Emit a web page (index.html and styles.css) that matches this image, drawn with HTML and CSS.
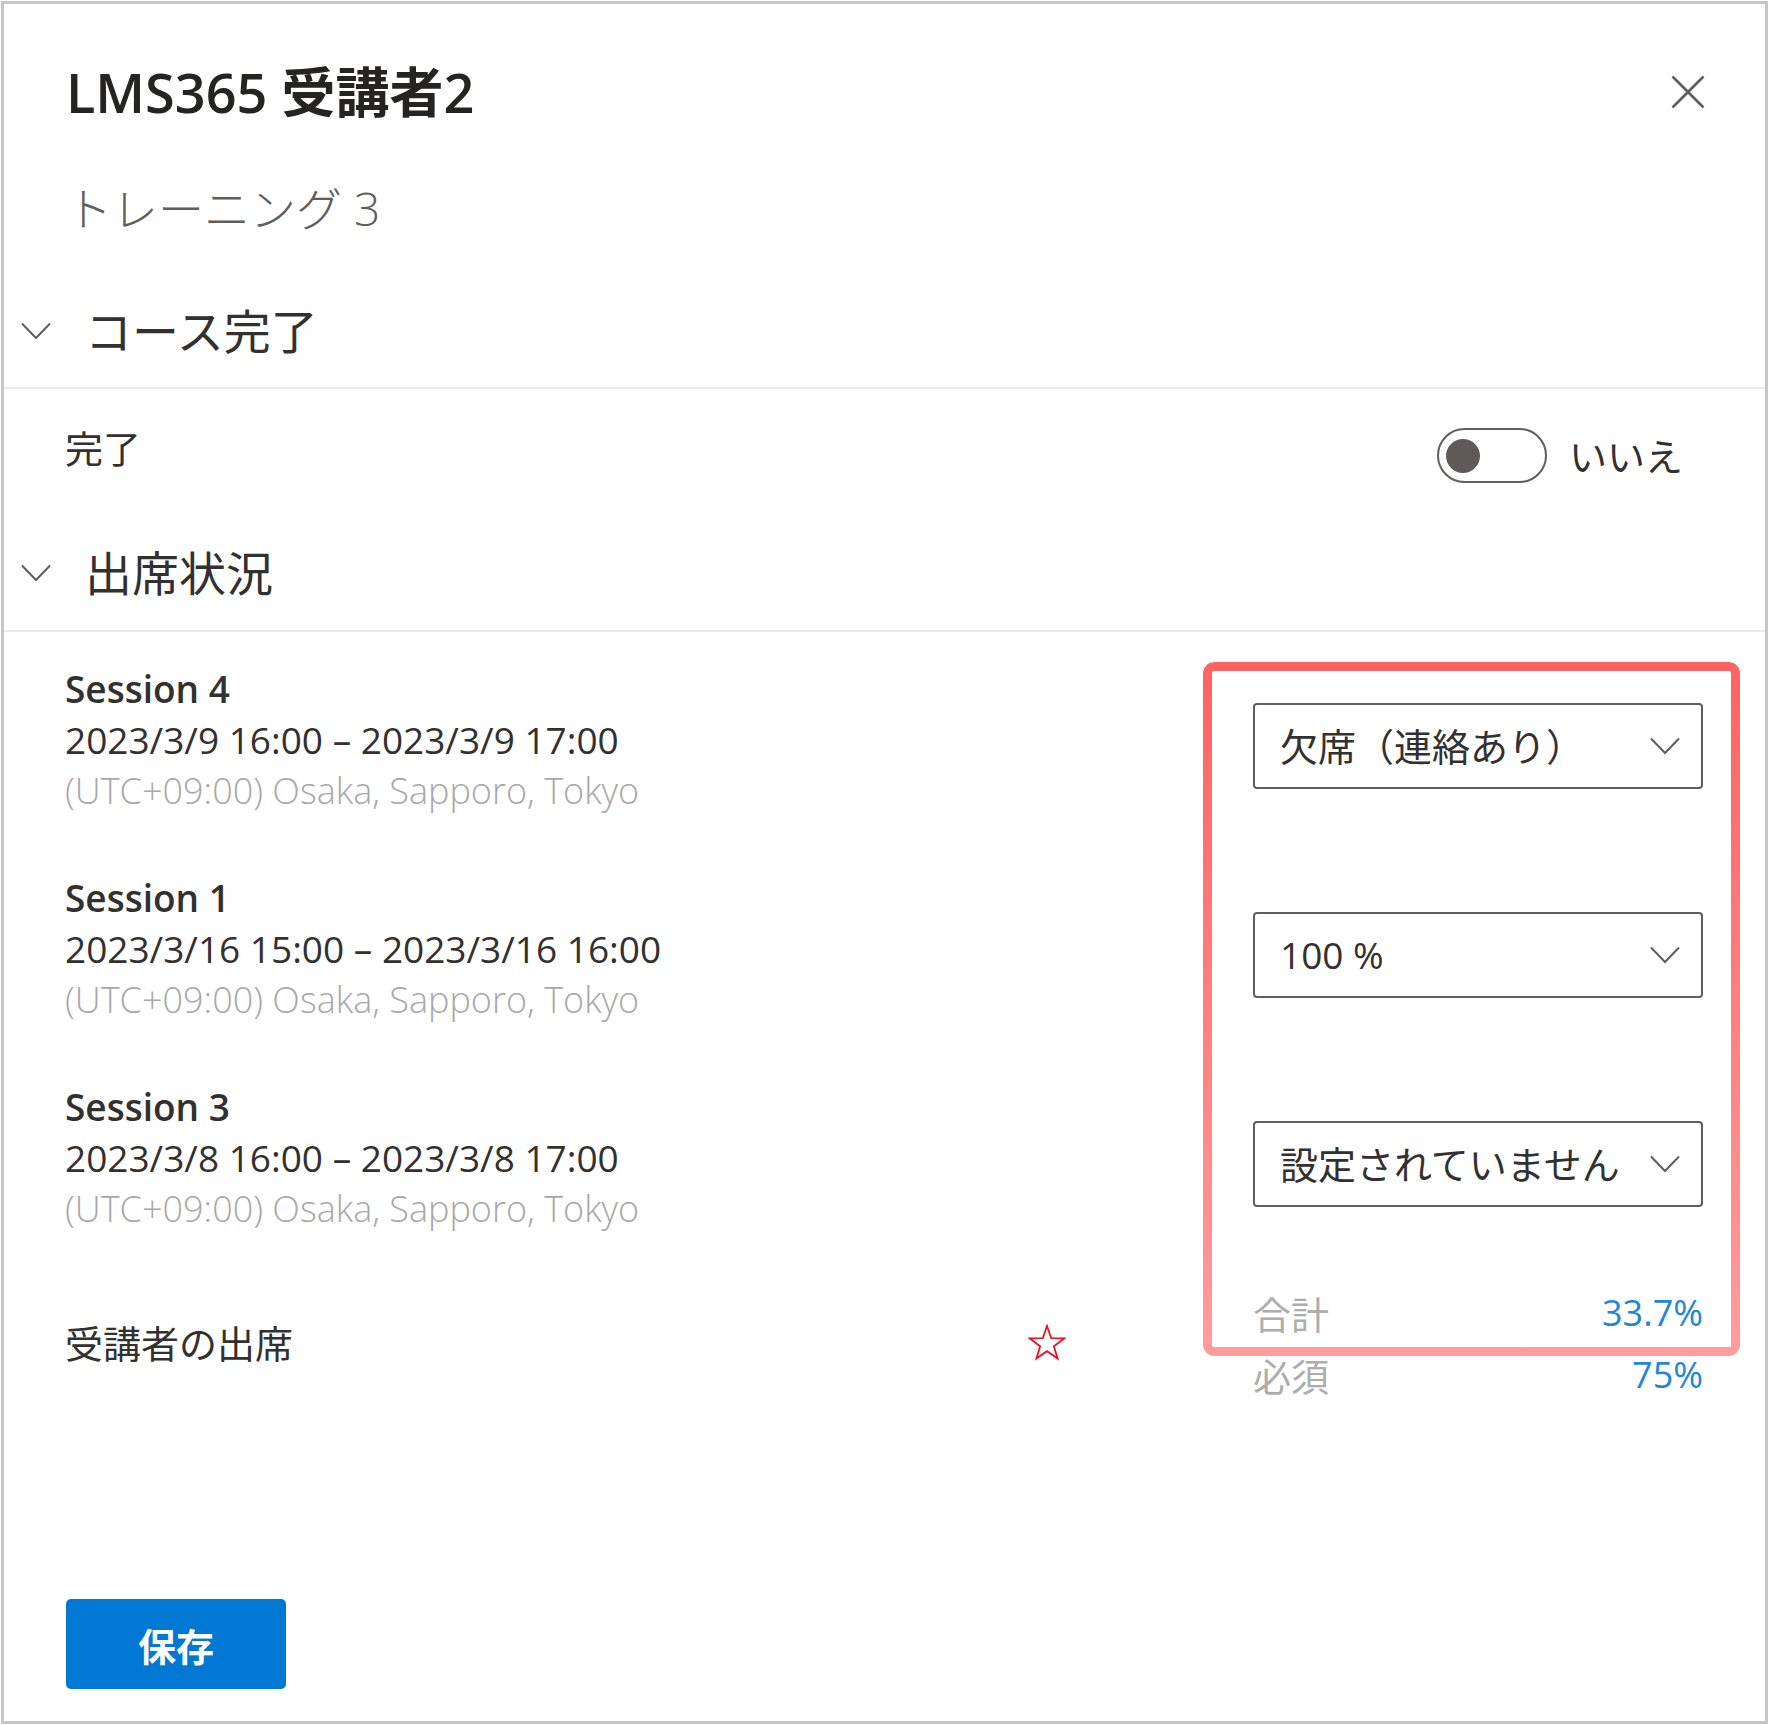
FILE: index.html
```html
<!DOCTYPE html>
<html lang="ja">
<head>
<meta charset="utf-8">
<title>LMS365 受講者2</title>
<link rel="stylesheet" href="styles.css">
</head>
<body>
<div class="panel">
  <header class="header">
    <h1 class="title">LMS365 受講者2</h1>
    <button class="close" aria-label="閉じる">
      <svg width="34" height="34" viewBox="0 0 34 34"><path d="M1.5 1.5 L32.5 32.5 M32.5 1.5 L1.5 32.5" stroke="#605e5c" stroke-width="2.6" fill="none"/></svg>
    </button>
  </header>
  <div class="subtitle">トレーニング 3</div>

  <div class="section-head">
    <svg class="chev" width="30" height="18" viewBox="0 0 30 18"><path d="M1 1.5 L15 16 L29 1.5" stroke="#605e5c" stroke-width="2" fill="none"/></svg>
    <span class="section-title">コース完了</span>
  </div>

  <div class="complete-row">
    <span class="label">完了</span>
    <div class="toggle-group">
      <span class="toggle"><span class="knob"></span></span>
      <span class="toggle-text">いいえ</span>
    </div>
  </div>

  <div class="section-head second">
    <svg class="chev" width="30" height="18" viewBox="0 0 30 18"><path d="M1 1.5 L15 16 L29 1.5" stroke="#605e5c" stroke-width="2" fill="none"/></svg>
    <span class="section-title">出席状況</span>
  </div>

  <div class="attendance">
    <div class="att-row">
      <div class="session">
        <div class="s-title">Session 4</div>
        <div class="s-time">2023/3/9 16:00 – 2023/3/9 17:00</div>
        <div class="s-tz">(UTC+09:00) Osaka, Sapporo, Tokyo</div>
      </div>
      <div class="dropdown">
        <span class="dd-text">欠席（連絡あり）</span>
        <svg class="dd-chev" width="30" height="18" viewBox="0 0 30 18"><path d="M1 1.5 L15 16 L29 1.5" stroke="#605e5c" stroke-width="2" fill="none"/></svg>
      </div>
    </div>
    <div class="att-row">
      <div class="session">
        <div class="s-title">Session 1</div>
        <div class="s-time">2023/3/16 15:00 – 2023/3/16 16:00</div>
        <div class="s-tz">(UTC+09:00) Osaka, Sapporo, Tokyo</div>
      </div>
      <div class="dropdown">
        <span class="dd-text latin">100 %</span>
        <svg class="dd-chev" width="30" height="18" viewBox="0 0 30 18"><path d="M1 1.5 L15 16 L29 1.5" stroke="#605e5c" stroke-width="2" fill="none"/></svg>
      </div>
    </div>
    <div class="att-row">
      <div class="session">
        <div class="s-title">Session 3</div>
        <div class="s-time">2023/3/8 16:00 – 2023/3/8 17:00</div>
        <div class="s-tz">(UTC+09:00) Osaka, Sapporo, Tokyo</div>
      </div>
      <div class="dropdown">
        <span class="dd-text">設定されていません</span>
        <svg class="dd-chev" width="30" height="18" viewBox="0 0 30 18"><path d="M1 1.5 L15 16 L29 1.5" stroke="#605e5c" stroke-width="2" fill="none"/></svg>
      </div>
    </div>

    <div class="summary-row">
      <div class="summary-label">
        <span class="label">受講者の出席</span>
        <svg class="star" width="38" height="38" viewBox="0 0 38 38"><polygon points="19,2 23.23,14.18 36.12,14.44 25.85,22.22 29.58,34.56 19,27.2 8.42,34.56 12.15,22.22 1.88,14.44 14.77,14.18" fill="none" stroke="#e81123" stroke-width="1.8" stroke-linejoin="miter"/></svg>
      </div>
      <div class="totals">
        <div class="total-row"><span class="t-key">合計</span><span class="t-val">33.7%</span></div>
        <div class="total-row"><span class="t-key">必須</span><span class="t-val">75%</span></div>
      </div>
    </div>
  </div>

  <footer class="footer">
    <button class="save">保存</button>
  </footer>

  <div class="highlight"></div>
</div>
</body>
</html>
```

FILE: styles.css
```css
html, body {
  margin: 0;
  padding: 0;
  background: #ffffff;
}

body {
  width: 1770px;
  height: 1725px;
  overflow: hidden;
  font-family: "Open Sans", "Noto Sans CJK JP", sans-serif;
  color: #323130;
}

.panel {
  box-sizing: border-box;
  position: relative;
  width: 1767px;
  height: 1723px;
  margin: 1px 0 0 1px;
  border: 3px solid #c6c6c6;
  background: #ffffff;
  display: flex;
  flex-direction: column;
}

/* header */
.header {
  display: flex;
  align-items: center;
  justify-content: space-between;
  padding: 53px 60px 0 62px;
}

.title {
  margin: 0;
  font-size: 54px;
  line-height: 70px;
  font-weight: 600;
  color: #252423;
}

.close {
  width: 34px;
  height: 34px;
  padding: 0;
  border: none;
  background: none;
  display: flex;
}

.subtitle {
  margin-top: 51px;
  padding-left: 62px;
  font-size: 46px;
  line-height: 60px;
  color: #605e5c;
  font-weight: 300;
}

/* section headers */
.section-head {
  display: flex;
  align-items: center;
  height: 60px;
  margin-top: 63px;
  padding-bottom: 26px;
  border-bottom: 2px solid #edebe9;
}

.section-head.second {
  margin-top: 60px;
  padding-bottom: 27px;
}

.chev {
  margin-left: 17px;
  flex: none;
}

.section-title {
  margin-left: 34px;
  font-size: 47px;
  line-height: 60px;
  color: #323130;
}

/* completion row */
.complete-row {
  display: flex;
  justify-content: space-between;
  align-items: flex-start;
  padding: 34px 62px 0 61px;
}

.label {
  font-size: 38px;
  line-height: 50px;
  color: #323130;
}

.toggle-group {
  display: flex;
  align-items: center;
  margin-top: 5px;
  padding-right: 20px;
}

.toggle {
  box-sizing: border-box;
  width: 110px;
  height: 55px;
  border: 2px solid #605e5c;
  border-radius: 28px;
  display: flex;
  align-items: center;
  padding-left: 7px;
}

.knob {
  width: 34px;
  height: 34px;
  border-radius: 50%;
  background: #5c5b5a;
}

.toggle-text {
  margin-left: 22px;
  font-size: 38px;
  line-height: 50px;
  color: #323130;
}

/* attendance */
.attendance {
  padding: 31px 62px 0 61px;
}

.att-row,
.summary-row {
  display: grid;
  grid-template-columns: 1fr 450px;
  column-gap: 187px;
}

.att-row + .att-row {
  margin-top: 56px;
}

.s-title {
  font-size: 37px;
  line-height: 51px;
  font-weight: 600;
  color: #323130;
}

.s-time {
  font-size: 37px;
  line-height: 51px;
  color: #323130;
}

.s-tz {
  font-size: 36px;
  line-height: 51px;
  font-weight: 300;
  color: #a8a8a8;
}

.dropdown {
  box-sizing: border-box;
  height: 86px;
  margin-top: 40px;
  border: 2px solid #605e5c;
  border-radius: 4px;
  display: flex;
  align-items: center;
  justify-content: space-between;
  padding: 0 21px 0 25px;
}

.dd-text {
  font-size: 38px;
  line-height: 50px;
  color: #323130;
}

.dd-text.latin {
  font-size: 37px;
}

.dd-chev {
  flex: none;
}

.summary-row {
  margin-top: 47px;
  align-items: center;
}

.summary-label {
  display: flex;
  justify-content: space-between;
  align-items: center;
}

.star {
  flex: none;
}

.total-row {
  height: 62px;
  display: flex;
  justify-content: space-between;
  align-items: center;
}

.t-key {
  font-size: 38px;
  color: #adadad;
}

.t-val {
  font-size: 36px;
  color: #1f86d8;
}

/* footer */
.footer {
  margin-top: auto;
  padding: 0 0 32px 62px;
}

.save {
  width: 220px;
  height: 90px;
  border: none;
  border-radius: 5px;
  background: #0078d4;
  color: #ffffff;
  font-family: "Noto Sans CJK JP", sans-serif;
  font-size: 38px;
  font-weight: 700;
  padding: 0;
}

/* annotation overlay */
.highlight {
  position: absolute;
  left: 1199px;
  top: 658px;
  width: 537px;
  height: 694px;
  box-sizing: border-box;
  padding: 9px;
  border-radius: 11px;
  background: linear-gradient(to bottom, #ff6262, #ff9c9c);
  -webkit-mask: linear-gradient(#000 0 0) content-box, linear-gradient(#000 0 0);
  -webkit-mask-composite: xor;
  mask-composite: exclude;
  pointer-events: none;
}
```
